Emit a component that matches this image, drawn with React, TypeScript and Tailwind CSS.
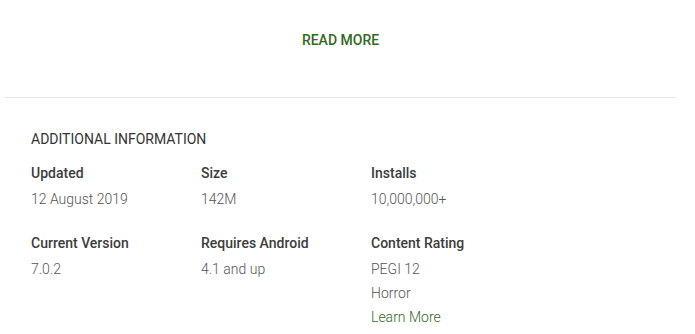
const rows = [
  [
    { label: 'Updated', values: ['12 August 2019'] },
    { label: 'Size', values: ['142M'] },
    { label: 'Installs', values: ['10,000,000+'] },
  ],
  [
    { label: 'Current Version', values: ['7.0.2'] },
    { label: 'Requires Android', values: ['4.1 and up'] },
    { label: 'Content Rating', values: ['PEGI 12', 'Horror'], link: 'Learn More' },
  ],
];

export default function App() {
  return (
    <div className="min-h-screen bg-white font-['Roboto',sans-serif] text-sm">
      <div className="mx-[5px] w-[671px]">
        <div className="pt-[30px] pb-[47px] flex justify-center">
          <button className="leading-5 font-medium text-[#33691e]">READ MORE</button>
        </div>
        <div className="border-t border-[#e6e6e6]" />
        <section className="px-[26px] pt-[31px]">
          <h2 className="leading-5 text-[#333] uppercase">Additional Information</h2>
          <div className="mt-3 space-y-5">
            {rows.map((row, i) => (
              <div key={i} className="flex">
                {row.map((item) => (
                  <div key={item.label} className="w-[170px]">
                    <div className="leading-6 font-medium text-[#3c3c3c]">{item.label}</div>
                    <div className="mt-[2px] font-light">
                      {item.values.map((v) => (
                        <div key={v} className="leading-6 text-[#555]">
                          {v}
                        </div>
                      ))}
                      {item.link && (
                        <a href="#" className="block leading-6 text-[#33691e]">
                          {item.link}
                        </a>
                      )}
                    </div>
                  </div>
                ))}
              </div>
            ))}
          </div>
        </section>
      </div>
    </div>
  );
}
